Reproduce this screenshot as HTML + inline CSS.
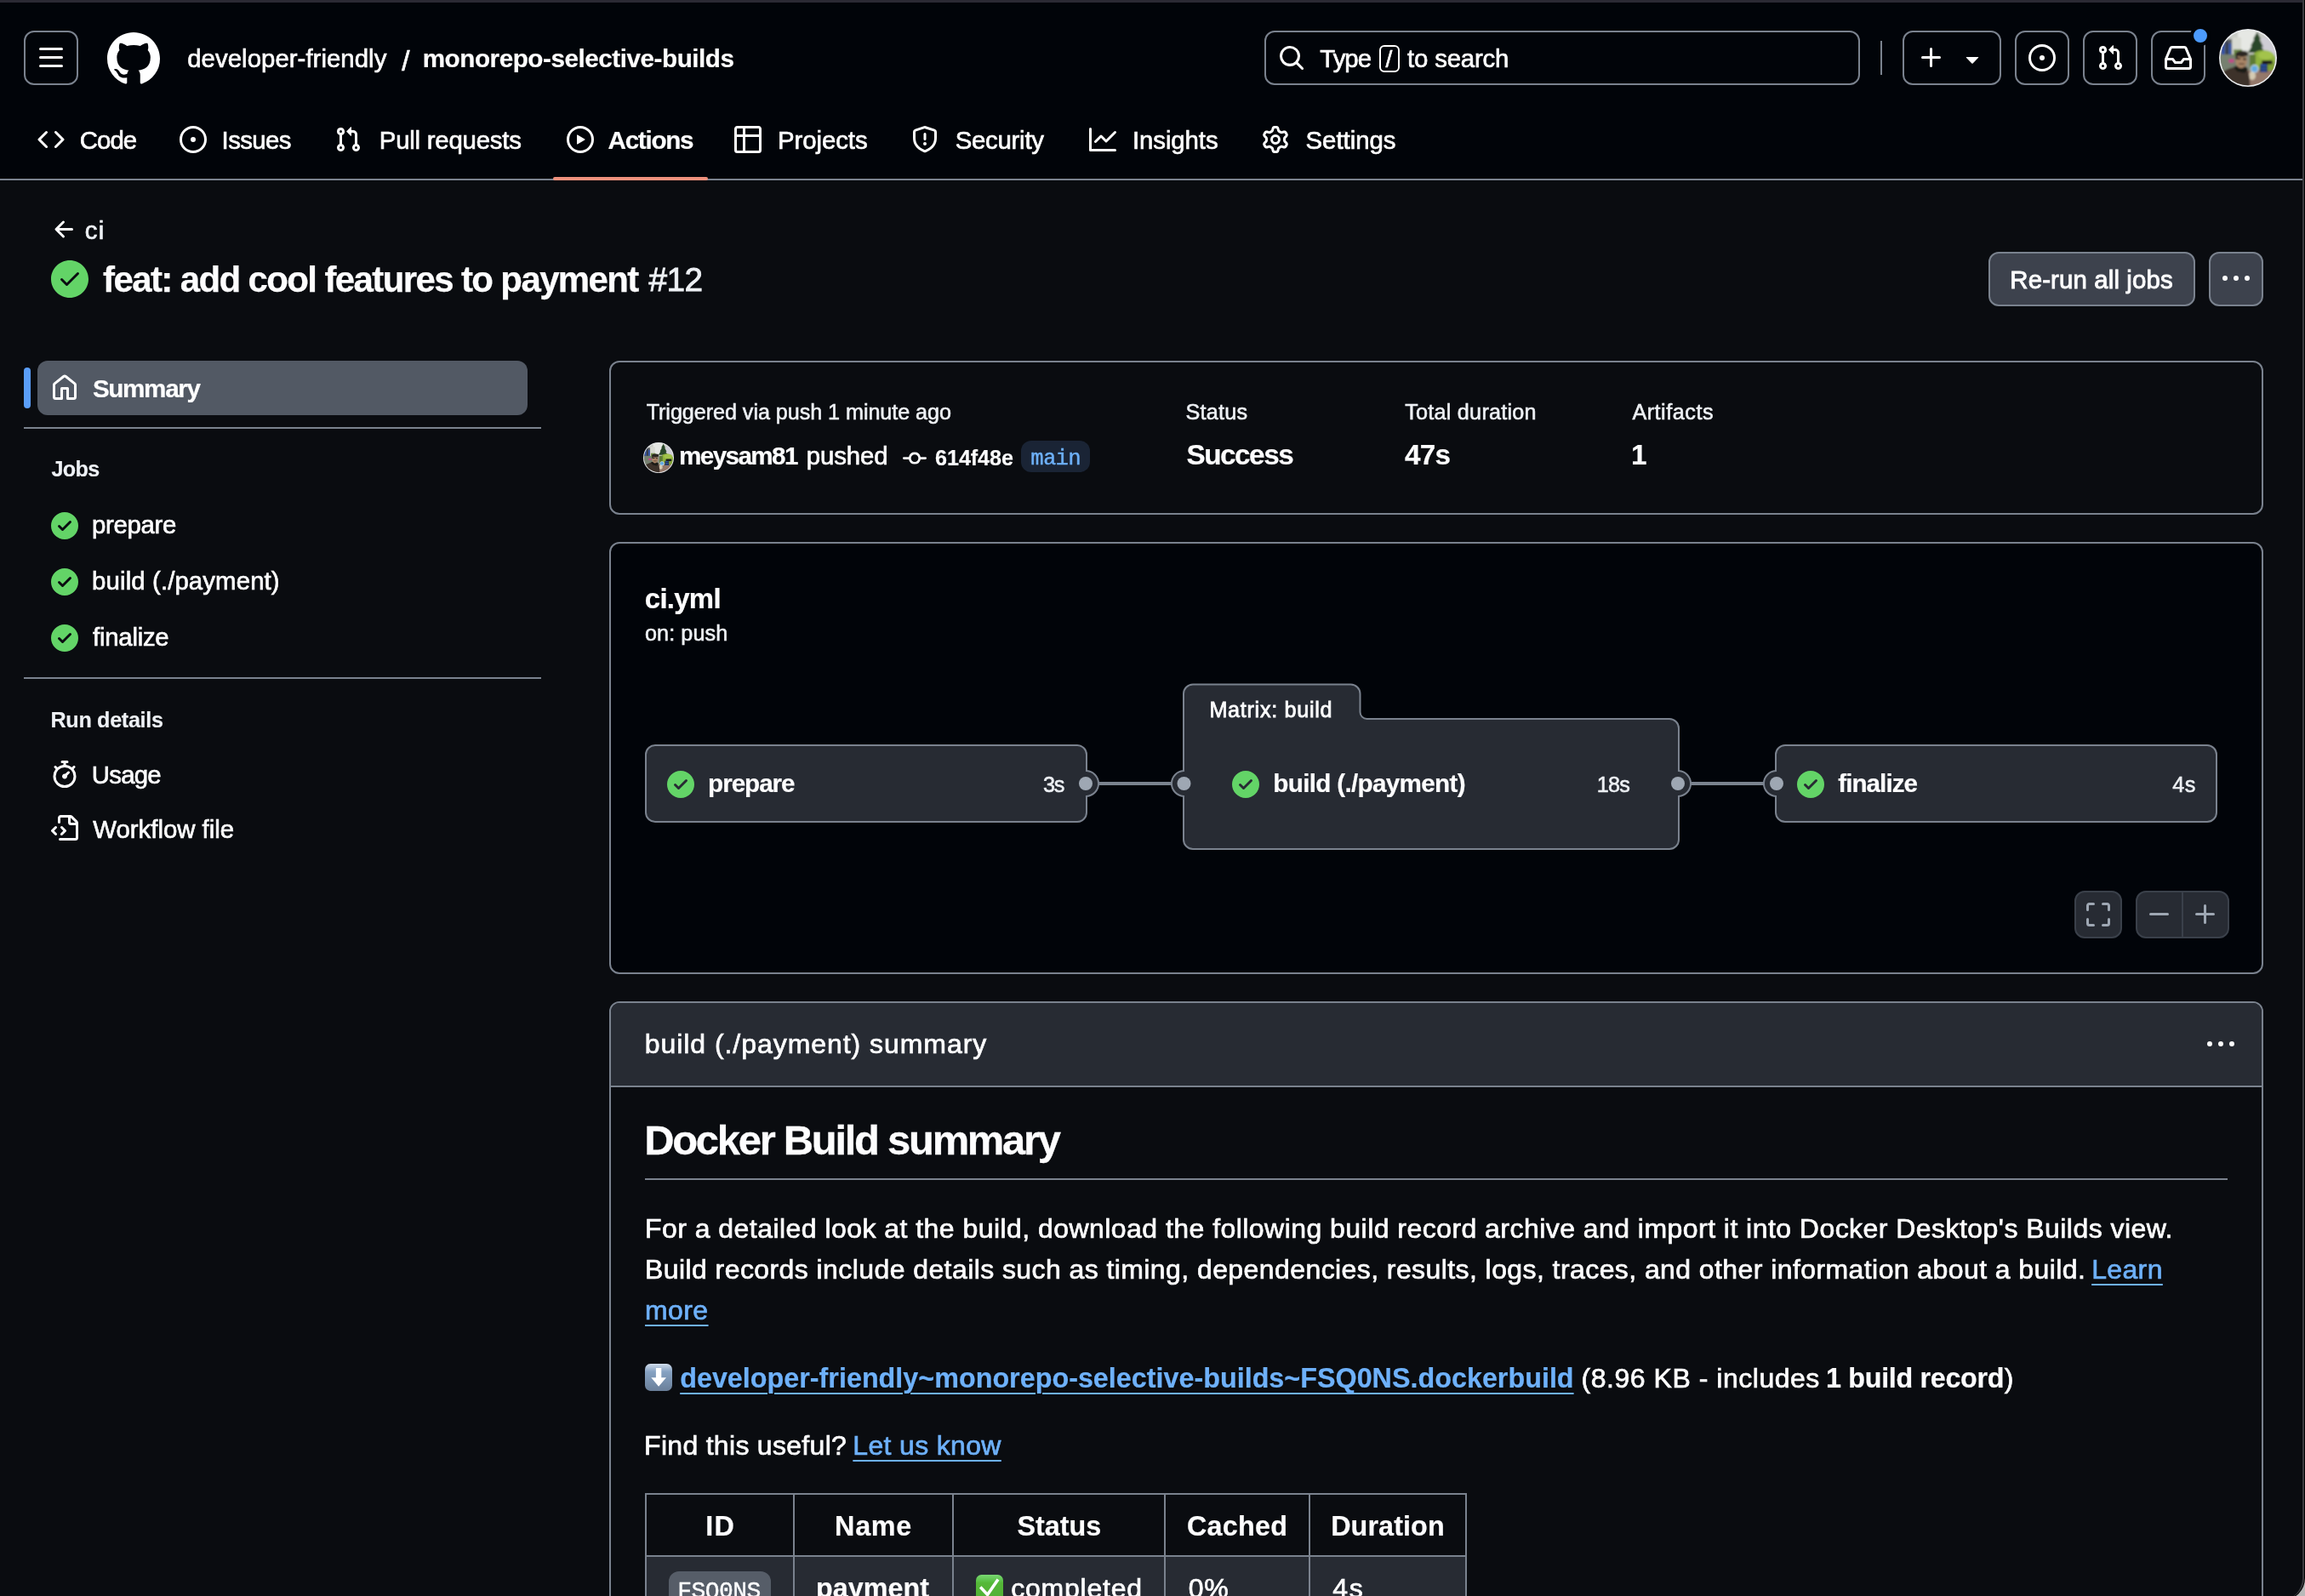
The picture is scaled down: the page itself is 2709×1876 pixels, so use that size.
<!DOCTYPE html>
<html lang="en"><head><meta charset="utf-8"><title>feat: add cool features to payment · developer-friendly/monorepo-selective-builds</title>
<style>
html,body{margin:0;padding:0;}
body{width:2709px;height:1876px;overflow:hidden;background:#b9b9b9;font-family:"Liberation Sans", sans-serif;position:relative;}
#outer{position:absolute;left:0;top:0;width:2709px;height:1881px;background:#000;border-bottom-right-radius:26px;overflow:hidden;}
#win{position:absolute;left:0;top:0;width:2706px;height:1880px;background:#0a0c10;border-right:2px solid #3b3b3f;border-bottom-right-radius:25px;overflow:hidden;will-change:transform;color:#fdfdfe;}
.a{position:absolute;box-sizing:border-box;display:block;}
.t{white-space:pre;line-height:1;font-weight:400;margin:0;text-decoration:none;font-family:inherit;color:inherit;}
.ul{text-decoration:underline;text-decoration-thickness:2px;text-underline-offset:6px;}
</style></head><body><div id="outer"><div id="win">
<header>
<div class="a " style="left:0px;top:3px;width:2709px;height:207px;background:#010409;"></div>
<div class="a " style="left:0px;top:0px;width:2709px;height:3px;background:#2b2a34;"></div>
<div class="a " style="left:0px;top:210px;width:2709px;height:2px;background:#7a828e;"></div>
<div class="a " style="left:28px;top:36px;width:64px;height:64px;border:2px solid #7a828e;border-radius:12px;"></div>
<svg class="a" style="left:44px;top:52px;" width="32" height="32" viewBox="0 0 16 16" fill="#ffffff"><path d="M1 2.75A.75.75 0 0 1 1.75 2h12.5a.75.75 0 0 1 0 1.5H1.75A.75.75 0 0 1 1 2.75Zm0 5A.75.75 0 0 1 1.75 7h12.5a.75.75 0 0 1 0 1.5H1.75A.75.75 0 0 1 1 7.75ZM1.75 12h12.5a.75.75 0 0 1 0 1.5H1.75a.75.75 0 0 1 0-1.5Z"/></svg>
<svg class="a" style="left:126.3px;top:37.7px;" width="62" height="62" viewBox="0 0 16 16" fill="#ffffff"><path d="M8 0c4.42 0 8 3.58 8 8a8.013 8.013 0 0 1-5.45 7.59c-.4.08-.55-.17-.55-.38 0-.27.01-1.13.01-2.2 0-.75-.25-1.23-.54-1.48 1.78-.2 3.65-.88 3.65-3.95 0-.88-.31-1.59-.82-2.15.08-.2.36-1.02-.08-2.12 0 0-.67-.22-2.2.82-.64-.18-1.32-.27-2-.27-.68 0-1.36.09-2 .27-1.53-1.03-2.2-.82-2.2-.82-.44 1.1-.16 1.92-.08 2.12-.51.56-.82 1.28-.82 2.15 0 3.06 1.86 3.75 3.64 3.95-.23.2-.44.55-.51 1.07-.46.21-1.61.55-2.33-.66-.15-.24-.6-.83-1.23-.82-.67.01-.27.38.01.53.34.19.73.9.82 1.13.16.45.68 1.31 2.69.94 0 .67.01 1.3.01 1.49 0 .21-.15.45-.55.38A7.995 7.995 0 0 1 0 8c0-4.42 3.58-8 8-8Z"/></svg>
<a href="#" class="a t" style="left:220.22px;top:54px;font-size:29.4px;-webkit-text-stroke:0.65px;color:#ffffff;letter-spacing:0.031px;">developer-friendly</a>
<span class="a t" style="left:472.17px;top:55px;font-size:33.0px;-webkit-text-stroke:0.73px;color:#ffffff;">/</span>
<a href="#" class="a t" style="left:496.69px;top:54px;font-size:29.68px;font-weight:700;-webkit-text-stroke:0.18px;color:#ffffff;letter-spacing:-0.468px;">monorepo-selective-builds</a>
<div class="a " style="left:1486px;top:36px;width:700px;height:64px;border:2px solid #7a828e;border-radius:12px;"></div>
<svg class="a" style="left:1502px;top:52px;" width="32" height="32" viewBox="0 0 16 16" fill="#ffffff"><path d="M10.68 11.74a6 6 0 0 1-7.922-8.982 6 6 0 0 1 8.982 7.922l3.040 3.040a.749.749 0 0 1-.326 1.275.749.749 0 0 1-.734-.215ZM11.500 7a4.499 4.499 0 1 0-8.997 0A4.499 4.499 0 0 0 11.500 7Z"/></svg>
<span class="a t" style="left:1551.33px;top:54px;font-size:29.4px;-webkit-text-stroke:0.65px;color:#ffffff;letter-spacing:-1.007px;">Type</span>
<div class="a " style="left:1621px;top:53px;width:24px;height:32px;border:2px solid #ffffff;border-radius:6px;"></div>
<span class="a t" style="left:1628.61px;top:56px;font-size:28.0px;-webkit-text-stroke:0.62px;color:#ffffff;">/</span>
<span class="a t" style="left:1654.03px;top:54px;font-size:29.4px;-webkit-text-stroke:0.65px;color:#ffffff;letter-spacing:-0.187px;">to search</span>
<div class="a " style="left:2210px;top:48px;width:2px;height:40px;background:#7a828e;"></div>
<div class="a " style="left:2236px;top:36px;width:116px;height:64px;border:2px solid #7a828e;border-radius:12px;"></div>
<svg class="a" style="left:2254px;top:52px;" width="32" height="32" viewBox="0 0 16 16" fill="#ffffff"><path d="M7.750 2a.75.75 0 0 1 .75.750V7h4.250a.750.750 0 0 1 0 1.500H8.500v4.250a.750.750 0 0 1-1.500 0V8.500H2.750a.750.750 0 0 1 0-1.500H7V2.750A.750.750 0 0 1 7.750 2Z"/></svg>
<svg class="a" style="left:2302px;top:52.5px;" width="32" height="32" viewBox="0 0 16 16" fill="#ffffff"><path d="m4.427 7.427 3.396 3.396a.250.250 0 0 0 .354 0l3.396-3.396A.250.250 0 0 0 11.396 7H4.604a.250.250 0 0 0-.177.427Z"/></svg>
<div class="a " style="left:2368px;top:36px;width:64px;height:64px;border:2px solid #7a828e;border-radius:12px;"></div>
<svg class="a" style="left:2384px;top:52px;" width="32" height="32" viewBox="0 0 16 16" fill="#ffffff"><path d="M8 9.5a1.5 1.5 0 1 0 0-3 1.5 1.5 0 0 0 0 3Z M8 0a8 8 0 1 1 0 16A8 8 0 0 1 8 0ZM1.5 8a6.5 6.5 0 1 0 13 0 6.5 6.5 0 0 0-13 0Z"/></svg>
<div class="a " style="left:2448px;top:36px;width:64px;height:64px;border:2px solid #7a828e;border-radius:12px;"></div>
<svg class="a" style="left:2464px;top:52px;" width="32" height="32" viewBox="0 0 16 16" fill="#ffffff"><path d="M1.5 3.25a2.25 2.25 0 1 1 3 2.122v5.256a2.251 2.251 0 1 1-1.5 0V5.372A2.25 2.25 0 0 1 1.5 3.25Zm5.677-.177L9.573.677A.25.25 0 0 1 10 .854V2.5h1A2.5 2.5 0 0 1 13.5 5v5.628a2.251 2.251 0 1 1-1.5 0V5a1 1 0 0 0-1-1h-1v1.646a.25.25 0 0 1-.427.177L7.177 3.427a.25.25 0 0 1 0-.354ZM3.75 2.5a.75.75 0 1 0 0 1.5.75.75 0 0 0 0-1.5Zm0 9.5a.75.75 0 1 0 0 1.5.75.75 0 0 0 0-1.5Zm8.25.75a.75.75 0 1 0 1.5 0 .75.75 0 0 0-1.5 0Z"/></svg>
<div class="a " style="left:2528px;top:36px;width:64px;height:64px;border:2px solid #7a828e;border-radius:12px;"></div>
<svg class="a" style="left:2544px;top:52px;" width="32" height="32" viewBox="0 0 16 16" fill="#ffffff"><path d="M2.800 2.060A1.750 1.750 0 0 1 4.410 1h7.180c.700 0 1.333.417 1.610 1.060l2.740 6.395c.040.093.060.194.060.295v4.500A1.750 1.750 0 0 1 14.250 15H1.750A1.750 1.750 0 0 1 0 13.250v-4.500c0-.101.020-.202.060-.295Zm1.610.440a.250.250 0 0 0-.230.152L1.887 8H4.750a.750.750 0 0 1 .600.300L6.625 10h2.750l1.275-1.700a.750.750 0 0 1 .600-.300h2.863L11.820 2.652a.250.250 0 0 0-.230-.152Zm10.090 7h-2.875l-1.275 1.700a.750.750 0 0 1-.600.300h-3.500a.750.750 0 0 1-.600-.300L4.375 9.500H1.500v3.750c0 .138.112.250.250.250h12.500a.250.250 0 0 0 .250-.250Z"/></svg>
<div class="a " style="left:2574px;top:30px;width:24px;height:24px;background:#4c9bfd;border:4px solid #010409;border-radius:12px;"></div>
<svg class="a" style="left:2608px;top:33.7px" width="68" height="68" viewBox="0 0 68 68">
<defs><clipPath id="av2608c"><circle cx="34" cy="34" r="32.4"/></clipPath><filter id="av2608f" x="-10%" y="-10%" width="120%" height="120%"><feGaussianBlur stdDeviation="0.8"/></filter></defs>
<circle cx="34" cy="34" r="34" fill="#eceef0"/>
<g clip-path="url(#av2608c)"><g filter="url(#av2608f)">
<rect x="0" y="0" width="68" height="68" fill="#8c9182"/>
<rect x="0" y="0" width="68" height="30" fill="#c9ccc6"/>
<rect x="22" y="1" width="22" height="24" fill="#e6e8e4"/>
<rect x="16" y="10" width="10" height="22" fill="#d8dad2"/>
<rect x="2" y="12" width="13" height="20" fill="#5a5f66"/>
<rect x="3" y="15" width="3.5" height="15" fill="#2a4fa8"/><rect x="8" y="15" width="2.5" height="15" fill="#26304a"/><rect x="11.5" y="17" width="3" height="13" fill="#2d55ad"/>
<rect x="50" y="10" width="18" height="28" fill="#cfcdd6"/>
<polygon points="44.7,3.5 49,12 47.5,12 52,21 50,21 54,28 34,28 38.5,20 37,20 41.5,12 40,12" fill="#2c4729"/>
<rect x="0" y="30" width="22" height="20" fill="#76806f"/>
<rect x="17" y="24" width="10" height="8" fill="#6f8a4a"/>
<ellipse cx="52" cy="36" rx="14.5" ry="11" fill="#8fb23c"/>
<ellipse cx="55" cy="31" rx="9" ry="5" fill="#a3c34c"/>
<ellipse cx="61" cy="50" rx="7" ry="11" fill="#7f9f36"/>
<rect x="36" y="30" width="7" height="18" fill="#5d7a35"/>
<rect x="50" y="37" width="13" height="4.5" rx="2" fill="#1d1f1a"/>
<rect x="0" y="49" width="68" height="19" fill="#94786a"/>
<ellipse cx="39" cy="55" rx="4" ry="5" fill="#d6cbb2"/>
<rect x="11.5" y="35.5" width="6" height="4" fill="#c4468a"/>
<rect x="48" y="41" width="9" height="10" fill="#23262e"/>
<rect x="49" y="42" width="7" height="1.8" fill="#2f5fc0"/><rect x="49" y="45.5" width="7" height="1.8" fill="#2f5fc0"/><rect x="49" y="48.8" width="7" height="1.6" fill="#2f5fc0"/>
<circle cx="41.6" cy="46.8" r="4.8" fill="#dfe6ea"/><circle cx="41.6" cy="46.8" r="3.9" fill="#62aae2"/>
<path d="M3 52 C8 47 14 46 20 44 L33 47 C36 52 36 60 36.5 68 L6 68 Z" fill="#3d322b"/>
<path d="M17 45 C20 42 31 42 34 47 L30 52 L21 50 Z" fill="#1f1b19"/>
<ellipse cx="26" cy="37.3" rx="6.8" ry="8.8" fill="#a98566"/>
<ellipse cx="27" cy="29.3" rx="7.4" ry="3.6" fill="#2a2522"/>
<rect x="19.5" y="28" width="2.5" height="8" rx="1" fill="#2a2522"/>
<rect x="21.5" y="34" width="4" height="1.8" rx="0.9" fill="#2a211d"/><rect x="28" y="34.6" width="4" height="1.8" rx="0.9" fill="#2a211d"/>
<rect x="23" y="40.5" width="7" height="1.6" rx="0.8" fill="#5e4536"/>
</g></g></svg>
</header>
<nav>
<svg class="a" style="left:44px;top:148px;" width="32" height="32" viewBox="0 0 16 16" fill="#ffffff"><path d="m11.28 3.22 4.25 4.25a.75.75 0 0 1 0 1.06l-4.25 4.25a.749.749 0 0 1-1.275-.326.749.749 0 0 1 .215-.734L13.94 8l-3.72-3.72a.749.749 0 0 1 .326-1.275.749.749 0 0 1 .734.215Zm-6.56 0a.751.751 0 0 1 1.042.018.751.751 0 0 1 .018 1.042L2.06 8l3.72 3.72a.749.749 0 0 1-.326 1.275.749.749 0 0 1-.734-.215L.47 8.53a.75.75 0 0 1 0-1.06Z"/></svg>
<svg class="a" style="left:211px;top:148px;" width="32" height="32" viewBox="0 0 16 16" fill="#ffffff"><path d="M8 9.5a1.5 1.5 0 1 0 0-3 1.5 1.5 0 0 0 0 3Z M8 0a8 8 0 1 1 0 16A8 8 0 0 1 8 0ZM1.5 8a6.5 6.5 0 1 0 13 0 6.5 6.5 0 0 0-13 0Z"/></svg>
<svg class="a" style="left:393px;top:148px;" width="32" height="32" viewBox="0 0 16 16" fill="#ffffff"><path d="M1.5 3.25a2.25 2.25 0 1 1 3 2.122v5.256a2.251 2.251 0 1 1-1.5 0V5.372A2.25 2.25 0 0 1 1.5 3.25Zm5.677-.177L9.573.677A.25.25 0 0 1 10 .854V2.5h1A2.5 2.5 0 0 1 13.5 5v5.628a2.251 2.251 0 1 1-1.5 0V5a1 1 0 0 0-1-1h-1v1.646a.25.25 0 0 1-.427.177L7.177 3.427a.25.25 0 0 1 0-.354ZM3.75 2.5a.75.75 0 1 0 0 1.5.75.75 0 0 0 0-1.5Zm0 9.5a.75.75 0 1 0 0 1.5.75.75 0 0 0 0-1.5Zm8.25.75a.75.75 0 1 0 1.5 0 .75.75 0 0 0-1.5 0Z"/></svg>
<svg class="a" style="left:666px;top:148px;" width="32" height="32" viewBox="0 0 16 16" fill="#ffffff"><path d="M8 0a8 8 0 1 1 0 16A8 8 0 0 1 8 0ZM1.5 8a6.5 6.5 0 1 0 13 0 6.5 6.5 0 0 0-13 0Zm4.879-2.773 4.264 2.559a.25.25 0 0 1 0 .428l-4.264 2.559A.25.25 0 0 1 6 10.559V5.442a.25.25 0 0 1 .379-.215Z"/></svg>
<svg class="a" style="left:863px;top:148px;" width="32" height="32" viewBox="0 0 16 16" fill="#ffffff"><path d="M0 1.75C0 .784.784 0 1.75 0h12.5C15.216 0 16 .784 16 1.75v12.5A1.75 1.75 0 0 1 14.25 16H1.75A1.75 1.75 0 0 1 0 14.25ZM6.5 6.5v8h7.75a.25.25 0 0 0 .25-.25V6.5Zm8-1.5V1.75a.25.25 0 0 0-.25-.25H6.5V5Zm-13 1.5v7.75c0 .138.112.25.25.25H5v-8ZM5 5V1.5H1.75a.25.25 0 0 0-.25.25V5Z"/></svg>
<svg class="a" style="left:1071px;top:148px;" width="32" height="32" viewBox="0 0 16 16" fill="#ffffff"><path d="M7.467.133a1.748 1.748 0 0 1 1.066 0l5.25 1.68A1.75 1.75 0 0 1 15 3.48V7c0 1.566-.32 3.182-1.303 4.682-.983 1.498-2.585 2.813-5.032 3.855a1.697 1.697 0 0 1-1.33 0c-2.447-1.042-4.049-2.357-5.032-3.855C1.32 10.182 1 8.566 1 7V3.48a1.75 1.75 0 0 1 1.217-1.667Zm.61 1.429a.25.25 0 0 0-.153 0l-5.25 1.68a.25.25 0 0 0-.174.238V7c0 1.358.275 2.666 1.057 3.86.784 1.194 2.121 2.34 4.366 3.297a.196.196 0 0 0 .154 0c2.245-.956 3.582-2.104 4.366-3.298C13.225 9.666 13.5 8.36 13.5 7V3.48a.251.251 0 0 0-.174-.237l-5.25-1.68ZM8.75 4.75v3a.75.75 0 0 1-1.5 0v-3a.75.75 0 0 1 1.5 0ZM9 10.5a1 1 0 1 1-2 0 1 1 0 0 1 2 0Z"/></svg>
<svg class="a" style="left:1280px;top:148px;" width="32" height="32" viewBox="0 0 16 16" fill="#ffffff"><path d="M1.5 1.75V13.5h13.75a.75.75 0 0 1 0 1.5H.75a.75.75 0 0 1-.75-.75V1.75a.75.75 0 0 1 1.5 0Zm14.28 2.53-5.25 5.25a.75.75 0 0 1-1.06 0L7 7.06 4.28 9.78a.751.751 0 0 1-1.042-.018.751.751 0 0 1-.018-1.042l3.25-3.25a.75.75 0 0 1 1.06 0L10 7.94l4.72-4.72a.751.751 0 0 1 1.042.018.751.751 0 0 1 .018 1.042Z"/></svg>
<svg class="a" style="left:1483px;top:148px;" width="32" height="32" viewBox="0 0 16 16" fill="#ffffff"><path d="M8 0a8.2 8.2 0 0 1 .701.031C9.444.095 9.99.645 10.16 1.29l.288 1.107c.018.066.079.158.212.224.231.114.454.243.668.386.123.082.233.09.299.071l1.103-.303c.644-.176 1.392.021 1.82.63.27.385.506.792.704 1.218.315.675.111 1.422-.364 1.891l-.814.806c-.049.048-.098.147-.088.294.016.257.016.515 0 .772-.01.147.038.246.088.294l.814.806c.475.469.679 1.216.364 1.891a7.977 7.977 0 0 1-.704 1.217c-.428.61-1.176.807-1.82.63l-1.102-.302c-.067-.019-.177-.011-.3.071a5.909 5.909 0 0 1-.668.386c-.133.066-.194.158-.211.224l-.29 1.106c-.168.646-.715 1.196-1.458 1.26a8.006 8.006 0 0 1-1.402 0c-.743-.064-1.289-.614-1.458-1.26l-.289-1.106c-.018-.066-.079-.158-.212-.224a5.738 5.738 0 0 1-.668-.386c-.123-.082-.233-.09-.299-.071l-1.103.303c-.644.176-1.392-.021-1.82-.63a8.12 8.12 0 0 1-.704-1.218c-.315-.675-.111-1.422.363-1.891l.815-.806c.05-.048.098-.147.088-.294a6.214 6.214 0 0 1 0-.772c.01-.147-.038-.246-.088-.294l-.815-.806C.635 6.045.431 5.298.746 4.623a7.920 7.920 0 0 1 .704-1.217c.428-.61 1.176-.807 1.820-.63l1.102.302c.067.019.177.011.3-.071.214-.143.437-.272.668-.386.133-.066.194-.158.211-.224l.290-1.106C6.009.645 6.556.095 7.299.030 7.530.010 7.764 0 8 0Zm-.571 1.525c-.036.003-.108.036-.137.146l-.289 1.105c-.147.561-.549.967-.998 1.189-.173.086-.340.183-.5.290-.417.278-.970.423-1.529.270l-1.103-.303c-.109-.030-.175.016-.195.045-.220.312-.412.644-.573.990-.014.031-.021.110.059.190l.815.806c.411.406.562.957.530 1.456a4.709 4.709 0 0 0 0 .582c.032.499-.119 1.050-.530 1.456l-.815.806c-.081.080-.073.159-.059.190.162.346.353.677.573.989.020.030.085.076.195.046l1.102-.303c.560-.153 1.113-.008 1.530.270.161.107.328.204.501.290.447.222.850.629.997 1.189l.289 1.105c.029.109.101.143.137.146a6.600 6.600 0 0 0 1.142 0c.036-.003.108-.036.137-.146l.289-1.105c.147-.561.549-.967.998-1.189.173-.086.340-.183.500-.290.417-.278.970-.423 1.529-.270l1.103.303c.109.029.175-.016.195-.045.220-.313.411-.644.573-.990.014-.031.021-.110-.059-.190l-.815-.806c-.411-.406-.562-.957-.530-1.456a4.709 4.709 0 0 0 0-.582c-.032-.499.119-1.050.530-1.456l.815-.806c.081-.080.073-.159.059-.190a6.464 6.464 0 0 0-.573-.989c-.020-.030-.085-.076-.195-.046l-1.102.303c-.560.153-1.113.008-1.530-.270a4.440 4.440 0 0 0-.501-.290c-.447-.222-.850-.629-.997-1.189l-.289-1.105c-.029-.110-.101-.143-.137-.146a6.600 6.600 0 0 0-1.142 0ZM11 8a3 3 0 1 1-6 0 3 3 0 0 1 6 0ZM9.500 8a1.500 1.500 0 1 0-3.001.001A1.500 1.500 0 0 0 9.500 8Z"/></svg>
<a href="#" class="a t" style="left:93.73px;top:150px;font-size:29.4px;-webkit-text-stroke:0.65px;color:#ffffff;letter-spacing:-0.922px;">Code</a>
<a href="#" class="a t" style="left:260.62px;top:150px;font-size:29.4px;-webkit-text-stroke:0.65px;color:#ffffff;letter-spacing:-0.600px;">Issues</a>
<a href="#" class="a t" style="left:445.82px;top:150px;font-size:29.4px;-webkit-text-stroke:0.65px;color:#ffffff;letter-spacing:-0.238px;">Pull requests</a>
<a href="#" class="a t" style="left:714.49px;top:150px;font-size:29.68px;font-weight:700;-webkit-text-stroke:0.18px;color:#ffffff;letter-spacing:-1.281px;">Actions</a>
<a href="#" class="a t" style="left:914.03px;top:150px;font-size:29.4px;-webkit-text-stroke:0.65px;color:#ffffff;letter-spacing:-0.075px;">Projects</a>
<a href="#" class="a t" style="left:1122.73px;top:150px;font-size:29.4px;-webkit-text-stroke:0.65px;color:#ffffff;letter-spacing:-0.275px;">Security</a>
<a href="#" class="a t" style="left:1330.92px;top:150px;font-size:29.4px;-webkit-text-stroke:0.65px;color:#ffffff;letter-spacing:-0.078px;">Insights</a>
<a href="#" class="a t" style="left:1534.53px;top:150px;font-size:29.4px;-webkit-text-stroke:0.65px;color:#ffffff;letter-spacing:-0.022px;">Settings</a>
<div class="a " style="left:650px;top:208px;width:182px;height:4px;background:#ef917d;border-radius:2px;"></div>
</nav>
<section>
<svg class="a" style="left:60px;top:254px;" width="32" height="32" viewBox="0 0 16 16" fill="#fdfdfe"><path d="M7.780 12.530a.750.750 0 0 1-1.060 0L2.470 8.280a.750.750 0 0 1 0-1.060l4.250-4.250a.751.751 0 0 1 1.042.018.751.751 0 0 1 .018 1.042L4.810 7h7.440a.750.750 0 0 1 0 1.500H4.810l2.970 2.970a.750.750 0 0 1 0 1.060Z"/></svg>
<a href="#" class="a t" style="left:99.83px;top:256px;font-size:29.4px;-webkit-text-stroke:0.65px;color:#eef1f5;letter-spacing:1.155px;">ci</a>
<svg class="a" style="left:58px;top:304px;" width="48" height="48" viewBox="0 0 24 24" fill="#63d467"><path d="M1 12C1 5.925 5.925 1 12 1s11 4.925 11 11-4.925 11-11 11S1 18.075 1 12Zm16.280-2.720a.751.751 0 0 0-.018-1.042.751.751 0 0 0-1.042-.018l-5.970 5.970-2.470-2.470a.751.751 0 0 0-1.042.018.751.751 0 0 0-.018 1.042l3 3a.750.750 0 0 0 1.060 0Z"/></svg>
<h1 class="a t" style="left:121.12px;top:308px;font-size:42.0px;font-weight:700;-webkit-text-stroke:0.25px;letter-spacing:-1.623px;">feat: add cool features to payment</h1>
<span class="a t" style="left:762.42px;top:310px;font-size:38.8px;-webkit-text-stroke:0.85px;color:#eef1f5;letter-spacing:-0.502px;">#12</span>
<div class="a " style="left:2337px;top:296px;width:243px;height:64px;background:#3d424d;border:2px solid #7a828e;border-radius:12px;"></div>
<span class="a t" style="left:2362.34px;top:314px;font-size:29.4px;-webkit-text-stroke:0.88px;letter-spacing:0.130px;">Re-run all jobs</span>
<div class="a " style="left:2596px;top:296px;width:64px;height:64px;background:#3d424d;border:2px solid #7a828e;border-radius:12px;"></div>
<svg class="a" style="left:2612px;top:312px;" width="32" height="32" viewBox="0 0 16 16" fill="#fdfdfe"><path d="M8 9a1.500 1.500 0 1 0 0-3 1.500 1.500 0 0 0 0 3ZM1.500 9a1.500 1.500 0 1 0 0-3 1.500 1.500 0 0 0 0 3Zm13 0a1.500 1.500 0 1 0 0-3 1.500 1.500 0 0 0 0 3Z"/></svg>
</section>
<aside>
<div class="a " style="left:28px;top:432px;width:8px;height:48px;background:#5a9ef8;border-radius:4px;"></div>
<div class="a " style="left:44px;top:424px;width:576px;height:64px;background:#525964;border-radius:12px;"></div>
<svg class="a" style="left:60px;top:440px;" width="32" height="32" viewBox="0 0 16 16" fill="#ffffff"><path d="M6.906.664a1.749 1.749 0 0 1 2.187 0l5.250 4.200c.415.332.657.835.657 1.367v7.019A1.750 1.750 0 0 1 13.250 15h-3.500a.750.750 0 0 1-.750-.750V9H7v5.250a.750.750 0 0 1-.750.750h-3.500A1.750 1.750 0 0 1 1 13.250V6.230c0-.531.242-1.034.657-1.366l5.250-4.200Zm1.250 1.171a.250.250 0 0 0-.312 0l-5.250 4.200a.250.250 0 0 0-.094.196v7.019c0 .138.112.250.250.250H5.500V8.250a.750.750 0 0 1 .750-.750h3.500a.750.750 0 0 1 .750.750v5.250h2.750a.250.250 0 0 0 .250-.250V6.230a.250.250 0 0 0-.094-.195Z"/></svg>
<a href="#" class="a t" style="left:108.89px;top:442px;font-size:29.68px;font-weight:700;-webkit-text-stroke:0.18px;color:#ffffff;letter-spacing:-1.352px;">Summary</a>
<div class="a " style="left:28px;top:502px;width:608px;height:2px;background:#7a828e;"></div>
<h2 class="a t" style="left:60.48px;top:539px;font-size:25.2px;font-weight:700;-webkit-text-stroke:0.15px;color:#eef1f5;letter-spacing:-0.676px;">Jobs</h2>
<svg class="a" style="left:60px;top:602px;" width="32" height="32" viewBox="0 0 16 16" fill="#63d467"><path d="M8 16A8 8 0 1 1 8 0a8 8 0 0 1 0 16Zm3.780-9.720a.751.751 0 0 0-.018-1.042.751.751 0 0 0-1.042-.018L6.750 9.190 5.280 7.720a.751.751 0 0 0-1.042.018.751.751 0 0 0-.018 1.042l2 2a.750.750 0 0 0 1.060 0Z"/></svg>
<span class="a t" style="left:108.12px;top:602px;font-size:29.4px;-webkit-text-stroke:0.65px;letter-spacing:-0.335px;">prepare</span>
<svg class="a" style="left:60px;top:668px;" width="32" height="32" viewBox="0 0 16 16" fill="#63d467"><path d="M8 16A8 8 0 1 1 8 0a8 8 0 0 1 0 16Zm3.780-9.720a.751.751 0 0 0-.018-1.042.751.751 0 0 0-1.042-.018L6.750 9.190 5.280 7.720a.751.751 0 0 0-1.042.018.751.751 0 0 0-.018 1.042l2 2a.750.750 0 0 0 1.060 0Z"/></svg>
<span class="a t" style="left:108.12px;top:668px;font-size:29.4px;-webkit-text-stroke:0.65px;letter-spacing:0.103px;">build (./payment)</span>
<svg class="a" style="left:60px;top:734px;" width="32" height="32" viewBox="0 0 16 16" fill="#63d467"><path d="M8 16A8 8 0 1 1 8 0a8 8 0 0 1 0 16Zm3.780-9.720a.751.751 0 0 0-.018-1.042.751.751 0 0 0-1.042-.018L6.750 9.190 5.280 7.720a.751.751 0 0 0-1.042.018.751.751 0 0 0-.018 1.042l2 2a.750.750 0 0 0 1.060 0Z"/></svg>
<span class="a t" style="left:109.12px;top:734px;font-size:29.4px;-webkit-text-stroke:0.65px;letter-spacing:-0.270px;">finalize</span>
<div class="a " style="left:28px;top:796px;width:608px;height:2px;background:#7a828e;"></div>
<h2 class="a t" style="left:59.48px;top:834px;font-size:25.2px;font-weight:700;-webkit-text-stroke:0.15px;color:#eef1f5;letter-spacing:-0.329px;">Run details</h2>
<svg class="a" style="left:60px;top:894px;" width="32" height="32" viewBox="0 0 16 16" fill="#fdfdfe"><path d="M5.750.750A.750.750 0 0 1 6.500 0h3a.750.750 0 0 1 0 1.500h-.750v1l-.001.041a6.724 6.724 0 0 1 3.464 1.435l.007-.006.750-.750a.749.749 0 0 1 1.275.326.749.749 0 0 1-.215.734l-.750.750-.006.007a6.750 6.750 0 1 1-10.548 0L2.720 5.030l-.750-.750a.751.751 0 0 1 .018-1.042.751.751 0 0 1 1.042-.018l.750.750.007.006A6.720 6.720 0 0 1 7.250 2.541V1.500H6.500a.750.750 0 0 1-.750-.750ZM8 14.500a5.250 5.250 0 1 0-.001-10.501A5.250 5.250 0 0 0 8 14.500Zm.389-6.700 1.330-1.330a.750.750 0 1 1 1.061 1.060L9.450 8.861A1.503 1.503 0 0 1 8 10.750a1.499 1.499 0 1 1 .389-2.950Z"/></svg>
<a href="#" class="a t" style="left:107.73px;top:896px;font-size:29.4px;-webkit-text-stroke:0.65px;letter-spacing:-0.740px;">Usage</a>
<svg class="a" style="left:60px;top:958px;" width="32" height="32" viewBox="0 0 16 16" fill="#fdfdfe"><path d="M4 1.750C4 .784 4.784 0 5.750 0h5.586c.464 0 .909.184 1.237.513l2.914 2.914c.329.328.513.773.513 1.237v8.586A1.750 1.750 0 0 1 14.250 15h-9a.750.750 0 0 1 0-1.500h9a.250.250 0 0 0 .250-.250V6h-2.750A1.750 1.750 0 0 1 10 4.250V1.500H5.750a.250.250 0 0 0-.250.250v2.500a.750.750 0 0 1-1.500 0Zm1.720 4.970a.750.750 0 0 1 1.060 0l2 2a.750.750 0 0 1 0 1.060l-2 2a.749.749 0 0 1-1.275-.326.749.749 0 0 1 .215-.734l1.470-1.470-1.470-1.470a.750.750 0 0 1 0-1.060ZM3.280 7.780 1.810 9.250l1.470 1.470a.751.751 0 0 1-.018 1.042.751.751 0 0 1-1.042.018l-2-2a.750.750 0 0 1 0-1.060l2-2a.751.751 0 0 1 1.042.018.751.751 0 0 1 .018 1.042Zm8.220-6.218V4.250c0 .138.112.250.250.250h2.688l-.011-.013-2.914-2.914-.013-.011Z"/></svg>
<a href="#" class="a t" style="left:109.33px;top:960px;font-size:29.4px;-webkit-text-stroke:0.65px;letter-spacing:-0.020px;">Workflow file</a>
</aside>
<main>
<section>
<div class="a " style="left:716px;top:424px;width:1944px;height:181px;border:2px solid #7a828e;border-radius:12px;"></div>
<span class="a t" style="left:759.67px;top:472px;font-size:25.2px;-webkit-text-stroke:0.55px;color:#eef1f5;letter-spacing:-0.065px;">Triggered via push 1 minute ago</span>
<svg class="a" style="left:756px;top:520px" width="36" height="36" viewBox="0 0 68 68">
<defs><clipPath id="av756c"><circle cx="34" cy="34" r="32.4"/></clipPath><filter id="av756f" x="-10%" y="-10%" width="120%" height="120%"><feGaussianBlur stdDeviation="0.8"/></filter></defs>
<circle cx="34" cy="34" r="34" fill="#eceef0"/>
<g clip-path="url(#av756c)"><g filter="url(#av756f)">
<rect x="0" y="0" width="68" height="68" fill="#8c9182"/>
<rect x="0" y="0" width="68" height="30" fill="#c9ccc6"/>
<rect x="22" y="1" width="22" height="24" fill="#e6e8e4"/>
<rect x="16" y="10" width="10" height="22" fill="#d8dad2"/>
<rect x="2" y="12" width="13" height="20" fill="#5a5f66"/>
<rect x="3" y="15" width="3.5" height="15" fill="#2a4fa8"/><rect x="8" y="15" width="2.5" height="15" fill="#26304a"/><rect x="11.5" y="17" width="3" height="13" fill="#2d55ad"/>
<rect x="50" y="10" width="18" height="28" fill="#cfcdd6"/>
<polygon points="44.7,3.5 49,12 47.5,12 52,21 50,21 54,28 34,28 38.5,20 37,20 41.5,12 40,12" fill="#2c4729"/>
<rect x="0" y="30" width="22" height="20" fill="#76806f"/>
<rect x="17" y="24" width="10" height="8" fill="#6f8a4a"/>
<ellipse cx="52" cy="36" rx="14.5" ry="11" fill="#8fb23c"/>
<ellipse cx="55" cy="31" rx="9" ry="5" fill="#a3c34c"/>
<ellipse cx="61" cy="50" rx="7" ry="11" fill="#7f9f36"/>
<rect x="36" y="30" width="7" height="18" fill="#5d7a35"/>
<rect x="50" y="37" width="13" height="4.5" rx="2" fill="#1d1f1a"/>
<rect x="0" y="49" width="68" height="19" fill="#94786a"/>
<ellipse cx="39" cy="55" rx="4" ry="5" fill="#d6cbb2"/>
<rect x="11.5" y="35.5" width="6" height="4" fill="#c4468a"/>
<rect x="48" y="41" width="9" height="10" fill="#23262e"/>
<rect x="49" y="42" width="7" height="1.8" fill="#2f5fc0"/><rect x="49" y="45.5" width="7" height="1.8" fill="#2f5fc0"/><rect x="49" y="48.8" width="7" height="1.6" fill="#2f5fc0"/>
<circle cx="41.6" cy="46.8" r="4.8" fill="#dfe6ea"/><circle cx="41.6" cy="46.8" r="3.9" fill="#62aae2"/>
<path d="M3 52 C8 47 14 46 20 44 L33 47 C36 52 36 60 36.5 68 L6 68 Z" fill="#3d322b"/>
<path d="M17 45 C20 42 31 42 34 47 L30 52 L21 50 Z" fill="#1f1b19"/>
<ellipse cx="26" cy="37.3" rx="6.8" ry="8.8" fill="#a98566"/>
<ellipse cx="27" cy="29.3" rx="7.4" ry="3.6" fill="#2a2522"/>
<rect x="19.5" y="28" width="2.5" height="8" rx="1" fill="#2a2522"/>
<rect x="21.5" y="34" width="4" height="1.8" rx="0.9" fill="#2a211d"/><rect x="28" y="34.6" width="4" height="1.8" rx="0.9" fill="#2a211d"/>
<rect x="23" y="40.5" width="7" height="1.6" rx="0.8" fill="#5e4536"/>
</g></g></svg>
<a href="#" class="a t" style="left:798.09px;top:521px;font-size:29.68px;font-weight:700;-webkit-text-stroke:0.18px;letter-spacing:-1.637px;">meysam81</a>
<span class="a t" style="left:947.83px;top:521px;font-size:29.4px;-webkit-text-stroke:0.65px;letter-spacing:-0.146px;">pushed</span>
<svg class="a" style="left:1061px;top:524.7px;" width="28" height="28" viewBox="0 0 16 16" fill="#fdfdfe"><path d="M11.930 8.500a4.002 4.002 0 0 1-7.860 0H.750a.750.750 0 0 1 0-1.500h3.320a4.002 4.002 0 0 1 7.860 0h3.320a.750.750 0 0 1 0 1.500Zm-1.430-.750a2.500 2.500 0 1 0-5 0 2.500 2.500 0 0 0 5 0Z"/></svg>
<a href="#" class="a t" style="left:1099.08px;top:526px;font-size:25.2px;font-weight:700;-webkit-text-stroke:0.15px;letter-spacing:-0.096px;">614f48e</a>
<div class="a " style="left:1200px;top:518px;width:81px;height:37px;background:#1a2435;border-radius:12px;"></div>
<a href="#" class="a t" style="left:1211.50px;top:527px;font-size:25px;color:#6eb1fa;font-family:'Liberation Mono', monospace;letter-spacing:-0.369px;-webkit-text-stroke:0.5px;">main</a>
<span class="a t" style="left:1393.58px;top:472px;font-size:25.2px;-webkit-text-stroke:0.55px;color:#eef1f5;letter-spacing:0.208px;">Status</span>
<span class="a t" style="left:1394.40px;top:518px;font-size:33.28px;font-weight:700;-webkit-text-stroke:0.2px;letter-spacing:-1.452px;">Success</span>
<span class="a t" style="left:1651.18px;top:472px;font-size:25.2px;-webkit-text-stroke:0.55px;color:#eef1f5;letter-spacing:0.249px;">Total duration</span>
<span class="a t" style="left:1651.00px;top:518px;font-size:33.28px;font-weight:700;-webkit-text-stroke:0.2px;letter-spacing:-0.751px;">47s</span>
<span class="a t" style="left:1918.38px;top:472px;font-size:25.2px;-webkit-text-stroke:0.55px;color:#eef1f5;letter-spacing:0.521px;">Artifacts</span>
<span class="a t" style="left:1917.10px;top:518px;font-size:33.28px;font-weight:700;-webkit-text-stroke:0.2px;">1</span>
</section>
<section>
<div class="a " style="left:716px;top:637px;width:1944px;height:508px;background:#010409;border:2px solid #7a828e;border-radius:12px;"></div>
<h2 class="a t" style="left:757.80px;top:688px;font-size:32.96px;font-weight:700;-webkit-text-stroke:0.2px;letter-spacing:-0.733px;">ci.yml</h2>
<span class="a t" style="left:757.98px;top:732px;font-size:25.2px;-webkit-text-stroke:0.55px;color:#eef1f5;letter-spacing:0.090px;">on: push</span>
<svg class="a" style="left:718px;top:639px" width="1940" height="503" viewBox="718 639 1940 503">
<g stroke="#7a828e" stroke-width="4"><path d="M1290 921H1378"/><path d="M1986 921H2074"/></g>
<g fill="#272b33" stroke="#7a828e" stroke-width="2">
<path d="M770 876 H1266 A11 11 0 0 1 1277 887 V906.03 A15 15 0 0 1 1277 935.97 V955 A11 11 0 0 1 1266 966 H770 A11 11 0 0 1 759 955 V887 A11 11 0 0 1 770 876 Z"/>
<path d="M1402 804.5 H1587.5 A11 11 0 0 1 1598.5 815.5 V837 A8 8 0 0 0 1606.5 845 H1962 A11 11 0 0 1 1973 856 V906.03 A15 15 0 0 1 1973 935.97 V987 A11 11 0 0 1 1962 998 H1402 A11 11 0 0 1 1391 987 V935.97 A15 15 0 0 1 1391 906.03 V815.5 A11 11 0 0 1 1402 804.5 Z"/>
<path d="M2098 876 H2594 A11 11 0 0 1 2605 887 V955 A11 11 0 0 1 2594 966 H2098 A11 11 0 0 1 2087 955 V935.97 A15 15 0 0 1 2087 906.03 V887 A11 11 0 0 1 2098 876 Z"/>
</g>
<g fill="#9ea7b3"><circle cx="1276" cy="921" r="8"/><circle cx="1391.5" cy="921" r="8"/><circle cx="1972" cy="921" r="8"/><circle cx="2088" cy="921" r="8"/></g>
</svg>
<svg class="a" style="left:784px;top:906px;" width="32" height="32" viewBox="0 0 16 16" fill="#63d467"><path d="M8 16A8 8 0 1 1 8 0a8 8 0 0 1 0 16Zm3.780-9.720a.751.751 0 0 0-.018-1.042.751.751 0 0 0-1.042-.018L6.750 9.190 5.280 7.720a.751.751 0 0 0-1.042.018.751.751 0 0 0-.018 1.042l2 2a.750.750 0 0 0 1.060 0Z"/></svg>
<span class="a t" style="left:832.09px;top:906px;font-size:29.68px;font-weight:700;-webkit-text-stroke:0.18px;letter-spacing:-1.055px;">prepare</span>
<span class="a t" style="left:1225.98px;top:910px;font-size:25.2px;-webkit-text-stroke:0.55px;color:#eef1f5;letter-spacing:-1.258px;">3s</span>
<span class="a t" style="left:1421.38px;top:822px;font-size:25.2px;-webkit-text-stroke:0.76px;letter-spacing:0.706px;">Matrix: build</span>
<svg class="a" style="left:1448px;top:906px;" width="32" height="32" viewBox="0 0 16 16" fill="#63d467"><path d="M8 16A8 8 0 1 1 8 0a8 8 0 0 1 0 16Zm3.780-9.720a.751.751 0 0 0-.018-1.042.751.751 0 0 0-1.042-.018L6.750 9.190 5.280 7.720a.751.751 0 0 0-1.042.018.751.751 0 0 0-.018 1.042l2 2a.750.750 0 0 0 1.060 0Z"/></svg>
<span class="a t" style="left:1496.29px;top:906px;font-size:29.68px;font-weight:700;-webkit-text-stroke:0.18px;letter-spacing:-0.692px;">build (./payment)</span>
<span class="a t" style="left:1876.78px;top:910px;font-size:25.2px;-webkit-text-stroke:0.55px;color:#eef1f5;letter-spacing:-0.783px;">18s</span>
<svg class="a" style="left:2112px;top:906px;" width="32" height="32" viewBox="0 0 16 16" fill="#63d467"><path d="M8 16A8 8 0 1 1 8 0a8 8 0 0 1 0 16Zm3.780-9.720a.751.751 0 0 0-.018-1.042.751.751 0 0 0-1.042-.018L6.750 9.190 5.280 7.720a.751.751 0 0 0-1.042.018.751.751 0 0 0-.018 1.042l2 2a.750.750 0 0 0 1.060 0Z"/></svg>
<span class="a t" style="left:2160.29px;top:906px;font-size:29.68px;font-weight:700;-webkit-text-stroke:0.18px;letter-spacing:-0.979px;">finalize</span>
<span class="a t" style="left:2553.28px;top:910px;font-size:25.2px;-webkit-text-stroke:0.55px;color:#eef1f5;letter-spacing:0.442px;">4s</span>
<div class="a " style="left:2438px;top:1047px;width:56px;height:56px;background:#272b33;border:2px solid #3a404a;border-radius:12px;"></div>
<svg class="a" style="left:2450px;top:1059px;" width="32" height="32" viewBox="0 0 16 16" fill="#9ea7b3"><path d="M1.750 10a.750.750 0 0 1 .750.750v2.500c0 .138.112.250.250.250h2.500a.750.750 0 0 1 0 1.500h-2.500A1.750 1.750 0 0 1 1 13.250v-2.500a.750.750 0 0 1 .750-.750Zm12.500 0a.750.750 0 0 1 .750.750v2.500A1.750 1.750 0 0 1 13.250 15h-2.500a.750.750 0 0 1 0-1.500h2.500a.250.250 0 0 0 .250-.250v-2.500a.750.750 0 0 1 .750-.750ZM2.750 2.500a.250.250 0 0 0-.250.250v2.500a.750.750 0 0 1-1.500 0v-2.500C1 1.784 1.784 1 2.750 1h2.500a.750.750 0 0 1 0 1.500ZM10 1.750a.750.750 0 0 1 .750-.750h2.500c.966 0 1.750.784 1.750 1.750v2.500a.750.750 0 0 1-1.500 0v-2.500a.250.250 0 0 0-.250-.250h-2.500a.750.750 0 0 1-.750-.750Z"/></svg>
<div class="a " style="left:2510px;top:1047px;width:110px;height:56px;background:#272b33;border:2px solid #3a404a;border-radius:12px;"></div>
<div class="a " style="left:2564px;top:1049px;width:2px;height:52px;background:#3a404a;"></div>
<svg class="a" style="left:2522px;top:1059px;" width="32" height="32" viewBox="0 0 16 16" fill="#9ea7b3"><path d="M2 7.750A.750.750 0 0 1 2.750 7h10a.750.750 0 0 1 0 1.500h-10A.750.750 0 0 1 2 7.750Z"/></svg>
<svg class="a" style="left:2576px;top:1059px;" width="32" height="32" viewBox="0 0 16 16" fill="#9ea7b3"><path d="M7.750 2a.75.75 0 0 1 .75.750V7h4.250a.750.750 0 0 1 0 1.500H8.500v4.250a.750.750 0 0 1-1.500 0V8.500H2.750a.750.750 0 0 1 0-1.500H7V2.750A.750.750 0 0 1 7.750 2Z"/></svg>
</section>
<article>
<div class="a " style="left:716px;top:1177px;width:1944px;height:740px;background:#0a0c10;border:2px solid #7a828e;border-radius:12px;"></div>
<div class="a " style="left:718px;top:1179px;width:1940px;height:97px;background:#272b33;border-radius:10px 10px 0 0;"></div>
<div class="a " style="left:718px;top:1276px;width:1940px;height:2px;background:#7a828e;"></div>
<h2 class="a t" style="left:757.75px;top:1211px;font-size:32.0px;-webkit-text-stroke:0.7px;letter-spacing:0.947px;">build (./payment) summary</h2>
<svg class="a" style="left:2594px;top:1211.5px;" width="32" height="32" viewBox="0 0 16 16" fill="#fdfdfe"><path d="M8 9a1.500 1.500 0 1 0 0-3 1.500 1.500 0 0 0 0 3ZM1.500 9a1.500 1.500 0 1 0 0-3 1.500 1.500 0 0 0 0 3Zm13 0a1.500 1.500 0 1 0 0-3 1.500 1.500 0 0 0 0 3Z"/></svg>
<h2 class="a t" style="left:757.14px;top:1316px;font-size:48.96px;font-weight:700;-webkit-text-stroke:0.29px;letter-spacing:-2.278px;margin:0;">Docker Build summary</h2>
<div class="a " style="left:758px;top:1385px;width:1860px;height:2px;background:#7a828e;"></div>
<span class="a t" style="left:758.05px;top:1428px;font-size:32.0px;-webkit-text-stroke:0.7px;letter-spacing:0.454px;">For a detailed look at the build, download the following build record archive and import it into Docker Desktop's Builds view.</span>
<span class="a t" style="left:758.05px;top:1476px;font-size:32.0px;-webkit-text-stroke:0.7px;letter-spacing:0.418px;">Build records include details such as timing, dependencies, results, logs, traces, and other information about a build.</span>
<a href="#" class="a t ul" style="left:2458.15px;top:1476px;font-size:32.0px;-webkit-text-stroke:0.7px;color:#6eb1fa;letter-spacing:0.363px;">Learn</a>
<a href="#" class="a t ul" style="left:758.05px;top:1524px;font-size:32.0px;-webkit-text-stroke:0.7px;color:#6eb1fa;letter-spacing:0.397px;">more</a>
<svg class="a" style="left:758px;top:1603px" width="32" height="32" viewBox="0 0 32 32"><defs><linearGradient id="dg" x1="0" y1="0" x2="0" y2="1"><stop offset="0" stop-color="#d2deec"/><stop offset="0.2" stop-color="#9db4cf"/><stop offset="0.3" stop-color="#86a2c2"/><stop offset="1" stop-color="#6a7f99"/></linearGradient></defs><rect x="0" y="0" width="32" height="32" rx="6.5" fill="url(#dg)"/><path d="M12.9 5h6.4v11.3H25L16.1 26.8 7.300 16.300h5.600Z" fill="#fff"/></svg>
<a href="#" class="a t ul" style="left:799.20px;top:1604px;font-size:32.32px;font-weight:700;-webkit-text-stroke:0.19px;color:#6eb1fa;">developer-friendly~monorepo-selective-builds~FSQ0NS.dockerbuild</a>
<span class="a t" style="left:1858.55px;top:1604px;font-size:32.0px;-webkit-text-stroke:0.7px;letter-spacing:0.524px;">(8.96 KB - includes</span>
<strong class="a t" style="left:2146.09px;top:1604px;font-size:32.32px;font-weight:700;-webkit-text-stroke:0.19px;letter-spacing:-0.332px;">1 build record</strong>
<span class="a t" style="left:2355.85px;top:1604px;font-size:32.0px;-webkit-text-stroke:0.7px;">)</span>
<span class="a t" style="left:757.05px;top:1683px;font-size:32.0px;-webkit-text-stroke:0.7px;letter-spacing:0.299px;">Find this useful?</span>
<a href="#" class="a t ul" style="left:1002.35px;top:1683px;font-size:32.0px;-webkit-text-stroke:0.7px;color:#6eb1fa;letter-spacing:0.334px;">Let us know</a>
<div class="a " style="left:758px;top:1829px;width:966px;height:60px;background:#272b33;"></div>
<div class="a " style="left:758px;top:1755px;width:966px;height:2px;background:#7a828e;"></div>
<div class="a " style="left:758px;top:1828px;width:966px;height:2px;background:#7a828e;"></div>
<div class="a " style="left:758px;top:1755px;width:2px;height:140px;background:#7a828e;"></div>
<div class="a " style="left:932px;top:1755px;width:2px;height:140px;background:#7a828e;"></div>
<div class="a " style="left:1119px;top:1755px;width:2px;height:140px;background:#7a828e;"></div>
<div class="a " style="left:1368px;top:1755px;width:2px;height:140px;background:#7a828e;"></div>
<div class="a " style="left:1538px;top:1755px;width:2px;height:140px;background:#7a828e;"></div>
<div class="a " style="left:1722px;top:1755px;width:2px;height:140px;background:#7a828e;"></div>
<b class="a t" style="left:829.20px;top:1778px;font-size:32.32px;font-weight:700;-webkit-text-stroke:0.19px;letter-spacing:1.233px;">ID</b>
<b class="a t" style="left:981.10px;top:1778px;font-size:32.32px;font-weight:700;-webkit-text-stroke:0.19px;letter-spacing:0.724px;">Name</b>
<b class="a t" style="left:1195.60px;top:1778px;font-size:32.32px;font-weight:700;-webkit-text-stroke:0.19px;letter-spacing:-0.034px;">Status</b>
<b class="a t" style="left:1394.89px;top:1778px;font-size:32.32px;font-weight:700;-webkit-text-stroke:0.19px;letter-spacing:0.265px;">Cached</b>
<b class="a t" style="left:1564.19px;top:1778px;font-size:32.32px;font-weight:700;-webkit-text-stroke:0.19px;letter-spacing:0.088px;">Duration</b>
<div class="a " style="left:786px;top:1847px;width:120px;height:50px;background:#565d68;border-radius:12px;"></div>
<code class="a t" style="left:796.30px;top:1857px;font-size:28px;font-family:'Liberation Mono', monospace;letter-spacing:-0.583px;-webkit-text-stroke:0.4px;">FSQ0NS</code>
<strong class="a t" style="left:959.10px;top:1851px;font-size:32.32px;font-weight:700;-webkit-text-stroke:0.19px;">payment</strong>
<svg class="a" style="left:1147px;top:1851px" width="32" height="32" viewBox="0 0 32 32"><defs><linearGradient id="cg" x1="0" y1="0" x2="0" y2="1"><stop offset="0" stop-color="#7ad873"/><stop offset="0.22" stop-color="#5cc249"/><stop offset="0.3" stop-color="#55b838"/><stop offset="1" stop-color="#4fae33"/></linearGradient></defs><rect x="0" y="0" width="32" height="32" rx="6.5" fill="url(#cg)"/><path d="M5.2 14.6L13.6 23.5L26 5.4" fill="none" stroke="#fff" stroke-width="3.6" stroke-linejoin="miter" stroke-miterlimit="8"/></svg>
<span class="a t" style="left:1188.15px;top:1851px;font-size:32.0px;-webkit-text-stroke:0.7px;letter-spacing:0.795px;">completed</span>
<span class="a t" style="left:1396.85px;top:1851px;font-size:32.0px;-webkit-text-stroke:0.7px;letter-spacing:0.503px;">0%</span>
<span class="a t" style="left:1566.35px;top:1851px;font-size:32.0px;-webkit-text-stroke:0.7px;letter-spacing:1.503px;">4s</span>
</article>
</main>
</div></div></body></html>
